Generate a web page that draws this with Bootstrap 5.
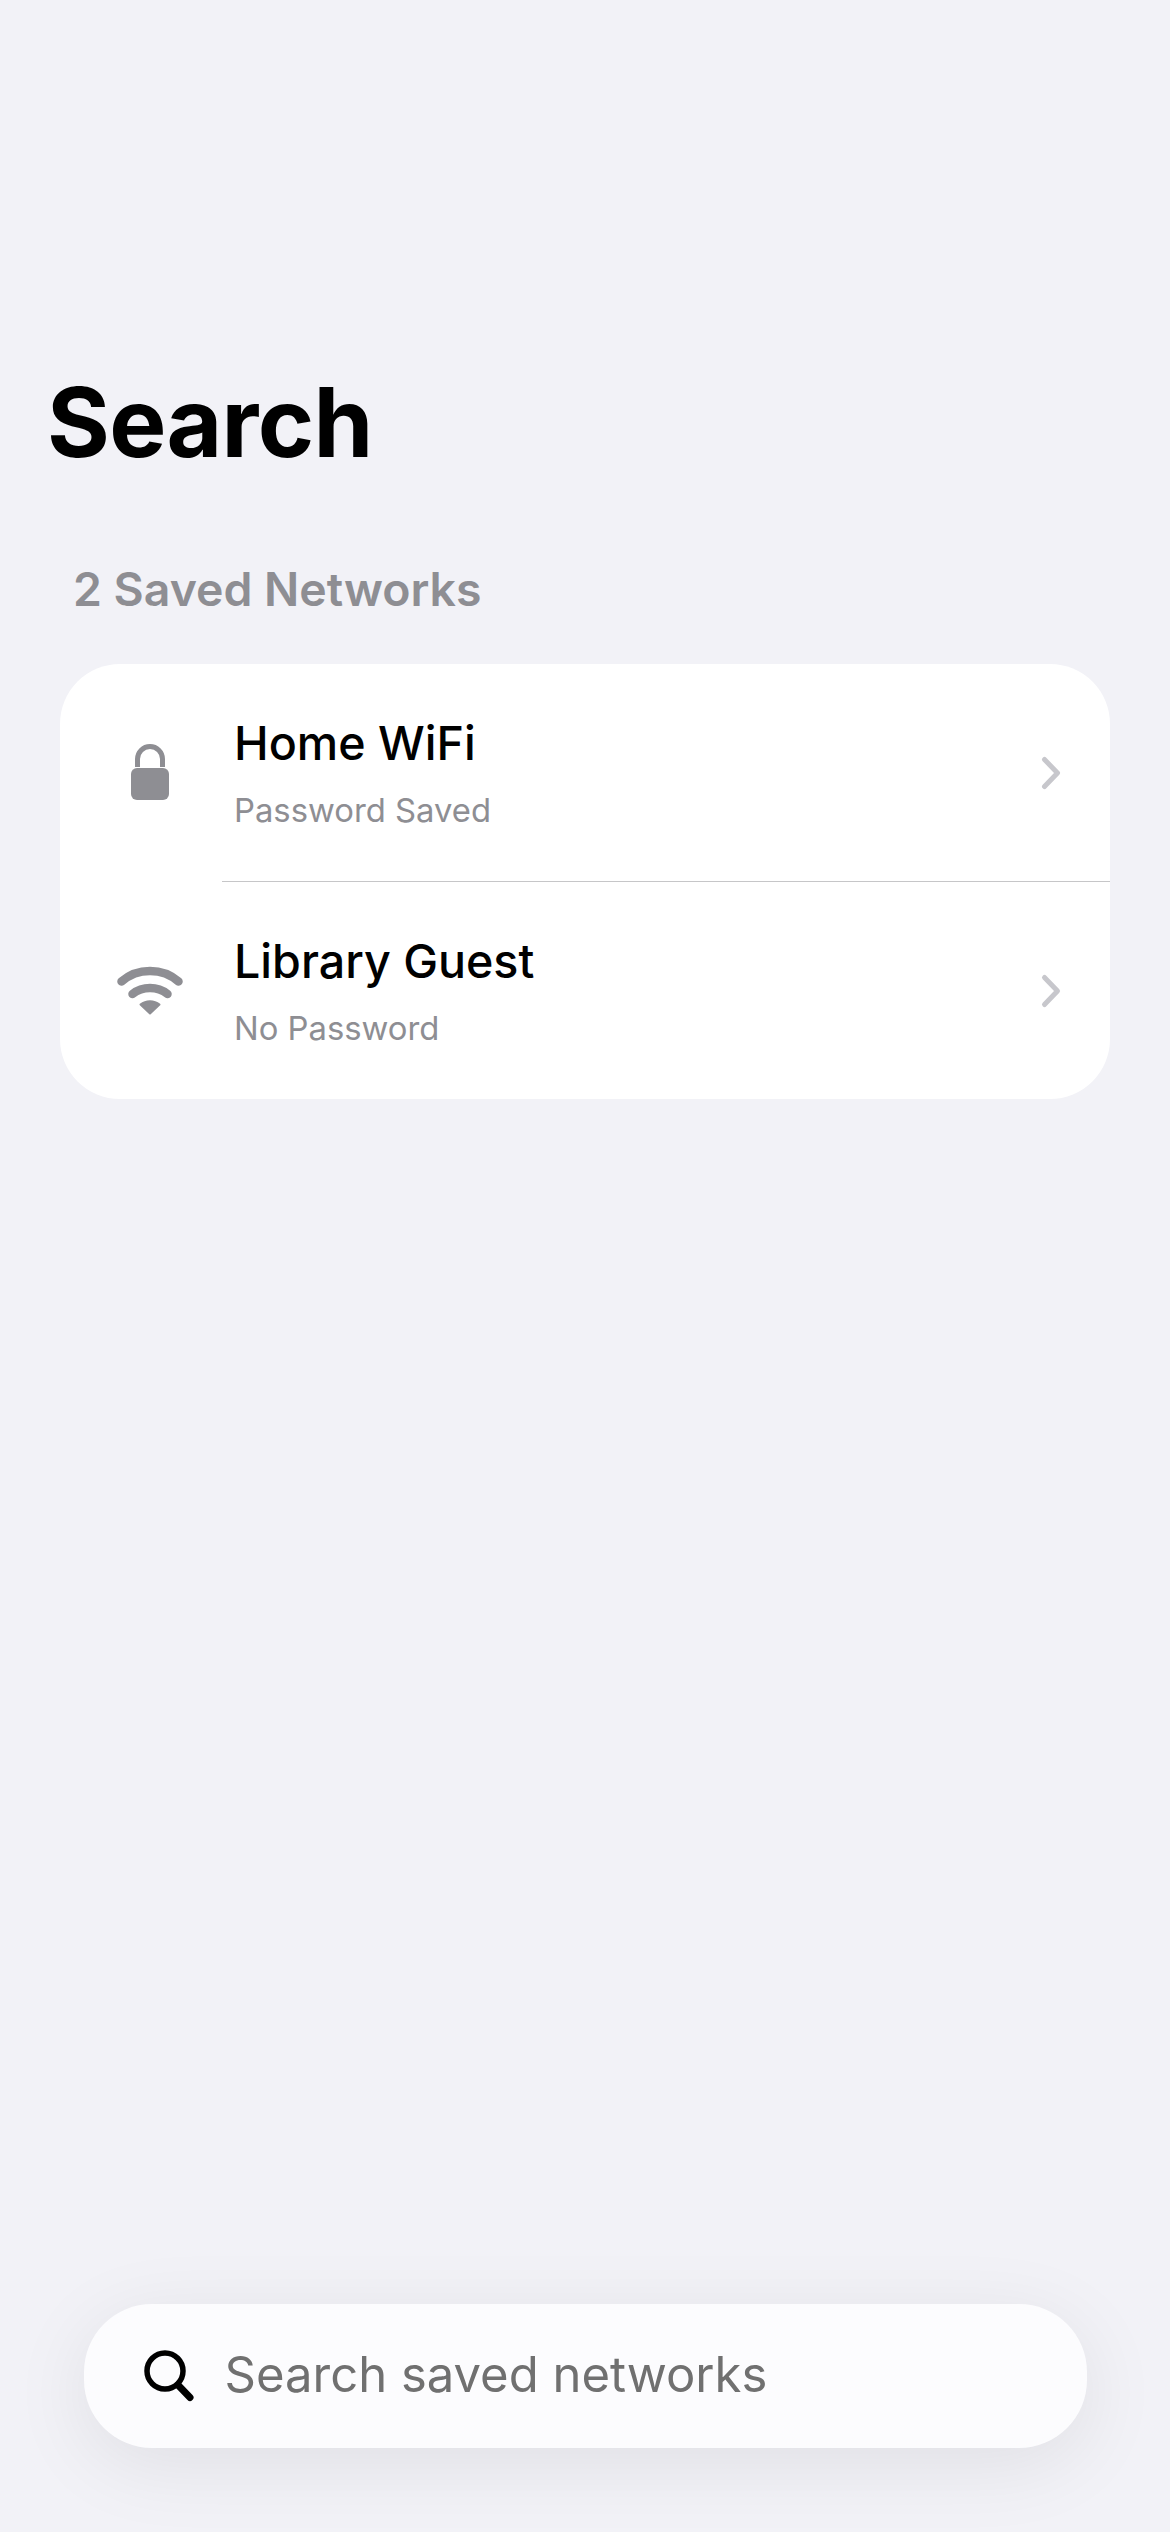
<!DOCTYPE html>
<html lang="en">
<head>
<meta charset="utf-8">
<title>Search</title>
<link href="https://cdn.jsdelivr.net/npm/bootstrap@5.3.0/dist/css/bootstrap.min.css" rel="stylesheet">
<style>
html,body{height:100%}
body{background:#f2f2f7;font-family:Inter,"Liberation Sans",sans-serif;color:#000}
.screen{height:2532px;padding:0 60px 84px}
.big-title{font-size:96px;font-weight:700;line-height:116px;letter-spacing:-.7px;margin:364px 0 0 -13px}
.sec-label{font-size:46.4px;font-weight:600;line-height:56px;color:#8e8e93;margin:81px 0 47px 13px}
.net-card{background:#fff;border-radius:60px;border:0;height:435px;overflow:hidden}
.net-row{height:217px;border:0;background:transparent;color:#000;padding:0 47px 0 0;position:relative}
.net-row+.net-row{height:218px;border-top:1px solid #c6c6c8;margin-left:162px;padding-left:0;overflow:visible}
.ico-cell{width:174px;padding-left:5px;flex:none}
.net-row+.net-row .ico-cell{margin-left:-162px}
.net-name{font-size:46.6px;font-weight:500;line-height:56px}
.net-sub{font-size:32.8px;line-height:40px;color:#8e8e93;margin-top:19px}
.search-pill{width:1003px;height:144px;margin:0 auto;background:#fcfcfe;border-radius:68px;box-shadow:0 16px 80px rgba(0,0,0,.08);padding-left:60px;gap:31px}
.ph-text{font-size:49px;line-height:60px;color:#707070;padding-bottom:2px}
</style>
</head>
<body>
<div class="screen d-flex flex-column">
  <h1 class="big-title">Search</h1>
  <div class="sec-label">2 Saved Networks</div>
  <div class="list-group net-card">
    <div class="list-group-item net-row d-flex align-items-center">
      <div class="ico-cell d-flex justify-content-center">
        <svg width="64" height="64" viewBox="0 0 64 64"><path d="M19.500 27V19a12.500 12.500 0 0 1 25 0V27" transform="translate(0,-1)" fill="none" stroke="#8e8e93" stroke-width="5"/><rect x="13" y="27" width="38" height="32" rx="6" fill="#8e8e93"/></svg>
      </div>
      <div class="flex-grow-1"><div class="net-name">Home WiFi</div><div class="net-sub">Password Saved</div></div>
      <svg width="24" height="36" viewBox="0 0 24 36"><path d="M5.500 4.500L18.500 18L5.500 31.500" fill="none" stroke="#c7c7cc" stroke-width="5" stroke-linecap="round" stroke-linejoin="round"/></svg>
    </div>
    <div class="list-group-item net-row d-flex align-items-center">
      <div class="ico-cell d-flex justify-content-center">
        <svg width="66" height="50" viewBox="0 0 66 50" fill="none" stroke="#8e8e93" stroke-linecap="round"><path d="M4.500 15.500C20.500 1.500 45.500 1.500 61.500 15.500" stroke-width="8.500"/><path d="M15.500 28C25.500 20 40.500 20 50.500 28" stroke-width="8.500"/><path d="M33 47.500L23.500 38.500C29 34 37 34 42.500 38.500Z" fill="#8e8e93" stroke="#8e8e93" stroke-width="2" stroke-linejoin="round"/></svg>
      </div>
      <div class="flex-grow-1"><div class="net-name">Library Guest</div><div class="net-sub">No Password</div></div>
      <svg width="24" height="36" viewBox="0 0 24 36"><path d="M5.500 4.500L18.500 18L5.500 31.500" fill="none" stroke="#c7c7cc" stroke-width="5" stroke-linecap="round" stroke-linejoin="round"/></svg>
    </div>
  </div>
  <div class="search-pill mt-auto d-flex align-items-center">
    <svg width="50" height="52" viewBox="0 0 50 52" fill="none" stroke="#000"><circle cx="21" cy="21" r="18" stroke-width="5.500"/><path d="M34 35L46 47.500" stroke-width="7" stroke-linecap="round"/></svg>
    <span class="ph-text">Search saved networks</span>
  </div>
</div>
</body>
</html>
